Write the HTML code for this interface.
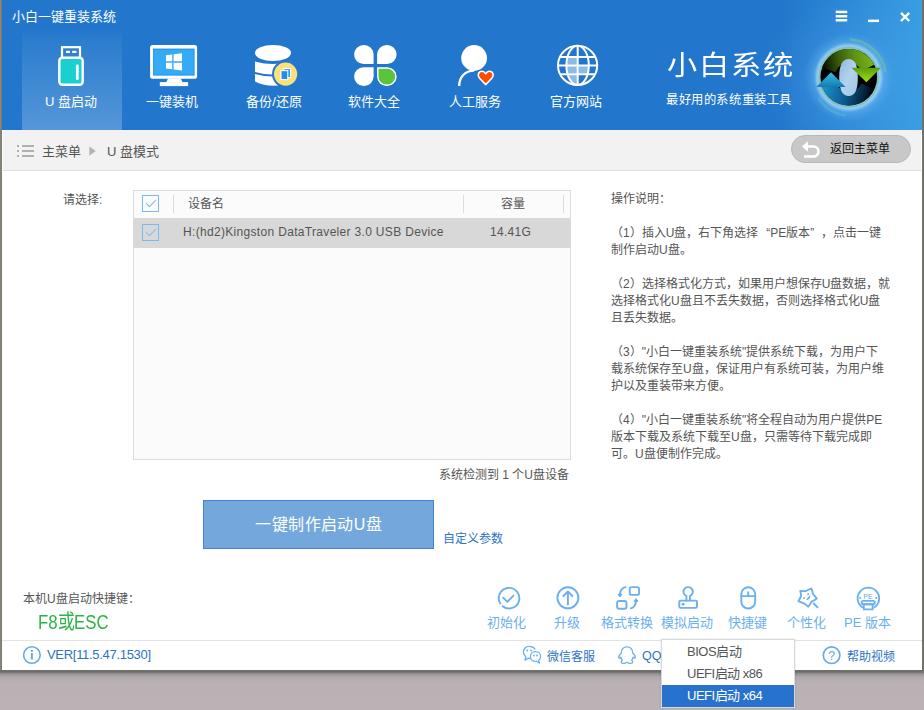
<!DOCTYPE html>
<html lang="zh-CN"><head><meta charset="utf-8">
<style>
html,body{margin:0;padding:0;}
body{width:924px;height:710px;overflow:hidden;position:relative;background:#bab2b5;font-family:"Liberation Sans",sans-serif;}
.abs{position:absolute;}
#desk{left:0;top:670px;width:924px;height:40px;background:linear-gradient(#6e6f6a 0,#6e6f6a 2px,#9a9496 4px,#b0a9ac 7px,#b9b1b4 12px,#bab2b5 100%);}
#inner{left:0;top:0;width:922px;height:670px;background:#fff linear-gradient(90deg,#fff 0,#fff 2px,#fff 2px);overflow:hidden;}
#lb{left:0;top:0;width:2px;height:670px;background:linear-gradient(90deg,#868580 0,#868580 1px,#7e7a70 1px);}
#rb{left:922px;top:0;width:2px;height:672px;background:#72726d;}
#hdr{left:0;top:0;width:922px;height:130px;background:linear-gradient(90deg,#2277cc 0,#2277cc 85%,#3a9ee3 100%);}
#glow{left:760px;top:0;width:162px;height:130px;background:radial-gradient(ellipse 90px 80px at 90px 78px,rgba(110,190,250,0.35) 0,rgba(90,170,240,0.15) 55%,rgba(60,150,230,0) 100%);}
#tabsel{left:22px;top:28px;width:100px;height:102px;background:linear-gradient(rgba(255,255,255,0) 0,rgba(255,255,255,0.05) 15%,rgba(255,255,255,0.23) 100%);}
.ttl{color:#fff;font-size:13px;white-space:nowrap;line-height:15px;}
.lbl{color:#fff;font-size:13px;white-space:nowrap;line-height:15px;text-align:center;width:100px;}
#crumb{left:3px;top:130px;width:918px;height:40px;background:#f2f2f2;border-bottom:1px solid #dedede;}
.g12{font-size:12px;color:#555;white-space:nowrap;line-height:14px;}
.g13{font-size:13px;color:#555;white-space:nowrap;line-height:15px;}
#backbtn{left:791px;top:135px;width:118px;height:26px;border:1px solid #b8b8b8;border-radius:14px;background:#c8c8c8;}
#table{left:133px;top:190px;width:436px;height:268px;border:1px solid #dcdcdc;background:#fbfbfb;}
#rowsel{left:134px;top:218px;width:436px;height:30px;background:#d8d8d8;}
.chk{width:15px;height:15px;border:1px solid #7ab8f2;background:transparent;}
#bigbtn{left:203px;top:500px;width:229px;height:47px;border:1px solid #3f87d3;background:#74a8dc;color:#fff;font-size:16px;line-height:47px;text-align:center;white-space:nowrap;letter-spacing:0.4px;text-indent:0.4px;}
.tl{width:60px;text-align:center;font-size:13px;color:#6cb0f0;line-height:15px;white-space:nowrap;}
#dd{left:661px;top:639px;width:132px;height:67px;border:1px solid #d8d8d8;background:#fff;box-shadow:0 0 2px rgba(0,0,0,0.12);}
#ddsel{left:662px;top:685px;width:132px;height:22px;background:#2672cc;}
.ddi{font-size:13px;color:#555;line-height:15px;white-space:nowrap;letter-spacing:-0.5px;}
.lk{font-size:12px;color:#2b73c5;line-height:14px;white-space:nowrap;}
</style></head>
<body>
<div class="abs" id="desk"></div>
<div class="abs" id="rb"></div>
<div class="abs" id="inner">
  <div class="abs" id="hdr"></div>
  <div class="abs" id="glow"></div>
  <div class="abs" id="tabsel"></div>
  <div class="abs ttl" style="left:12px;top:9px;">小白一键重装系统</div>
  <div class="abs lbl" style="left:21px;top:94px;">U 盘启动</div>
  <div class="abs lbl" style="left:122px;top:94px;">一键装机</div>
  <div class="abs lbl" style="left:224px;top:94px;">备份/还原</div>
  <div class="abs lbl" style="left:324px;top:94px;">软件大全</div>
  <div class="abs lbl" style="left:425px;top:94px;">人工服务</div>
  <div class="abs lbl" style="left:526px;top:94px;">官方网站</div>
  <div class="abs" id="brand" style="left:667px;top:51px;font-size:27.5px;line-height:30px;letter-spacing:2px;color:#fff;white-space:nowrap;font-weight:400;transform:scaleX(1.1);transform-origin:0 0;">小白系统</div>
  <div class="abs" id="slogan" style="left:666px;top:93px;font-size:12.3px;letter-spacing:0.6px;line-height:15px;color:#fff;white-space:nowrap;">最好用的系统重装工具</div>

    <svg class="abs" style="left:0;top:0" width="922" height="130" viewBox="0 0 922 130">
    <defs>
      <clipPath id="gcl"><ellipse cx="577.6" cy="65.4" rx="11.5" ry="19.5"/></clipPath>
      <linearGradient id="lgTop" x1="0" y1="0" x2="0" y2="1"><stop offset="0" stop-color="#7fae24"/><stop offset="0.45" stop-color="#2d3a08"/><stop offset="0.6" stop-color="#000"/></linearGradient>
      <linearGradient id="lgBot" x1="0" y1="0" x2="0" y2="1"><stop offset="0" stop-color="#000"/><stop offset="0.55" stop-color="#062a44"/><stop offset="1" stop-color="#0f5f94"/></linearGradient>
      <linearGradient id="lgG" x1="0" y1="0" x2="0" y2="1"><stop offset="0" stop-color="#5d9a10"/><stop offset="1" stop-color="#9ae20c"/></linearGradient>
      <linearGradient id="lgC" x1="0" y1="0" x2="0" y2="1"><stop offset="0" stop-color="#35c4e8"/><stop offset="1" stop-color="#137ab0"/></linearGradient>
      <linearGradient id="lgO" x1="0" y1="0" x2="1" y2="1"><stop offset="0" stop-color="#8fb8dc"/><stop offset="0.5" stop-color="#b2d2ee"/><stop offset="1" stop-color="#a0c6e8"/></linearGradient>
      <radialGradient id="rgGlow"><stop offset="0.55" stop-color="#9fdcff" stop-opacity="0.7"/><stop offset="0.75" stop-color="#7cc6f8" stop-opacity="0.35"/><stop offset="1" stop-color="#5ab0f0" stop-opacity="0"/></radialGradient><linearGradient id="lgGB" gradientUnits="userSpaceOnUse" x1="824" y1="74" x2="872" y2="64"><stop offset="0" stop-color="#050800"/><stop offset="0.35" stop-color="#3a5c0c"/><stop offset="0.7" stop-color="#5f9414"/><stop offset="1" stop-color="#78b01a"/></linearGradient><linearGradient id="lgBB" gradientUnits="userSpaceOnUse" x1="826" y1="82" x2="874" y2="92"><stop offset="0" stop-color="#1a8cc8"/><stop offset="0.45" stop-color="#0a5a8e"/><stop offset="0.8" stop-color="#04263c"/><stop offset="1" stop-color="#000"/></linearGradient><linearGradient id="lgDisc" x1="0.7" y1="0" x2="0.3" y2="1"><stop offset="0" stop-color="#84b424"/><stop offset="0.28" stop-color="#3f6410"/><stop offset="0.5" stop-color="#000"/><stop offset="0.72" stop-color="#04304e"/><stop offset="1" stop-color="#1a7ab2"/></linearGradient><filter id="blur1" x="-20%" y="-20%" width="140%" height="140%"><feGaussianBlur stdDeviation="1"/></filter><filter id="blur05" x="-20%" y="-20%" width="140%" height="140%"><feGaussianBlur stdDeviation="0.5"/></filter>
    </defs>
    <!-- window buttons -->
    <g fill="#fff">
      <rect x="835.7" y="10.7" width="11.5" height="2.5"/><rect x="835.7" y="15" width="11.5" height="2.5"/><rect x="835.7" y="19" width="11.5" height="2.5"/>
      <rect x="868" y="19.6" width="11" height="2.5"/>
    </g>
    <path d="M901 12.8 L909.2 21 M909.2 12.8 L901 21" stroke="#fff" stroke-width="2.4"/>
    <!-- USB -->
    <rect x="62" y="47.2" width="18" height="11" fill="none" stroke="#fff" stroke-width="2.2"/>
    <rect x="66" y="50.8" width="4" height="2.2" fill="#fff"/><rect x="72.2" y="50.8" width="4.2" height="2.2" fill="#fff"/>
    <rect x="59.3" y="57.7" width="23.4" height="27" rx="3" fill="#19cfcf" stroke="#fff" stroke-width="2.4"/>
    <rect x="75.9" y="64.6" width="2.8" height="15.5" rx="1.4" fill="#fff"/>
    <!-- Monitor -->
    <rect x="150.1" y="45.1" width="47" height="33.6" rx="2.5" fill="#fff"/>
    <rect x="153.1" y="48.6" width="41.5" height="27" fill="#1c90ea"/>
    <rect x="154.1" y="49.6" width="39.5" height="25" fill="#35abf6"/>
    <path d="M168 78.5 H180.8 L182.6 82.4 H166.2 Z" fill="#fff"/>
    <rect x="159.8" y="82.1" width="28.3" height="4" fill="#fff"/>
    <g fill="#fff">
      <path d="M166 55.3 L172.2 54.5 V61.2 H166 Z"/><path d="M173.6 54.3 L182 53.3 V61.2 H173.6 Z"/>
      <path d="M166 62.8 H172.2 V69.3 L166 68.5 Z"/><path d="M173.6 62.8 H182 V70.4 L173.6 69.4 Z"/>
    </g>
    <!-- Database -->
    <ellipse cx="273" cy="53" rx="18" ry="8.1" fill="#fff"/>
    <path d="M255 61.4 Q273 66.4 291 61.4 V72 Q273 77 255 72 Z" fill="#fff"/>
    <path d="M255 73.9 Q273 78.9 291 73.9 V81.4 Q273 90.2 255 81.4 Z" fill="#fff"/>
    <circle cx="285.6" cy="74.1" r="13.6" fill="#2377cc"/>
    <circle cx="285.6" cy="74.1" r="11.6" fill="#fce07c"/>
    <rect x="283.8" y="68.6" width="6.8" height="9" fill="#2196f3" stroke="#fff" stroke-width="1.1"/>
    <rect x="281" y="70.6" width="6.8" height="9" fill="#1e8ef0" stroke="#fff" stroke-width="1.1"/>
    <!-- Clover -->
    <g fill="#fff">
      <path d="M354.1 54.5 A9.6 9.6 0 0 1 363.7 44.9 H364 A9.6 9.6 0 0 1 373.6 54.5 V64 H363.6 A9.5 9.5 0 0 1 354.1 54.5 Z"/>
      <path d="M377.1 64 V54.5 A9.6 9.6 0 0 1 386.7 44.9 H387 A9.6 9.6 0 0 1 396.6 54.5 A9.5 9.5 0 0 1 387.1 64 Z"/>
      <path d="M373.6 67.3 V76.6 A9.4 9.4 0 0 1 364.2 86 H363.5 A9.4 9.4 0 0 1 354.1 76.6 A9.3 9.3 0 0 1 363.4 67.3 Z"/>
    </g>
    <path d="M377.8 68 H387.2 A8.7 8.7 0 0 1 395.9 76.7 A8.6 8.6 0 0 1 387.2 85.3 H386.5 A8.7 8.7 0 0 1 377.8 76.6 Z" fill="#5bc43a" stroke="#fff" stroke-width="1.5"/>
    <!-- Person -->
    <circle cx="474.1" cy="58" r="12.9" fill="#fff"/>
    <path d="M459.2 86 C459.2 77 465 70.8 474 70.6" fill="none" stroke="#fff" stroke-width="2.3"/>
    <path d="M485.7 84.6 L479.6 78.2 C476.9 75.4 478.4 71.3 482 71.3 C483.8 71.3 485 72.6 485.7 73.8 C486.4 72.6 487.6 71.3 489.4 71.3 C493 71.3 494.5 75.4 491.8 78.2 Z" fill="#ff4b00" stroke="#fff" stroke-width="1.6" stroke-linejoin="round"/>
    <!-- Globe -->
    <g clip-path="url(#gcl)" fill="#8dbbe8">
      <rect x="566" y="57.5" width="11" height="7.4"/>
      <rect x="566" y="66" width="11" height="7.7"/>
      <rect x="578.6" y="66" width="11" height="7.7"/>
      <rect x="566" y="74.8" width="11" height="11"/>
    </g>
    <g fill="none" stroke="#fff" stroke-width="2">
      <circle cx="577.6" cy="65.4" r="19.6"/>
      <ellipse cx="577.6" cy="65.4" rx="11.2" ry="19.6"/>
      <path d="M577.7 46 V85 M560 56.9 H595.2 M558.2 65.4 H597 M560.1 74.2 H595.1"/>
    </g>
    <!-- Logo -->
    <circle cx="848.8" cy="77.2" r="45" fill="url(#rgGlow)"/>
    <circle cx="848.8" cy="77.2" r="31" fill="none" stroke="#c4eaff" stroke-width="4.5" opacity="0.5" filter="url(#blur1)"/>
    <path d="M850 39.5 A38 38 0 0 1 885.5 72" fill="none" stroke="#79c48e" stroke-width="2.4" opacity="0.55" filter="url(#blur05)"/>
    <path d="M818.5 98 A38 38 0 0 0 846 115.5" fill="none" stroke="#5ab6d0" stroke-width="2.4" opacity="0.55" filter="url(#blur05)"/>
    <circle cx="848.8" cy="77.2" r="29.6" fill="none" stroke="#86bd8c" stroke-width="1.6" opacity="0.7"/>
    <circle cx="848.8" cy="77.2" r="28.3" fill="#000"/>
    <path d="M828.8 69.9 A21.3 21.3 0 0 1 867.9 67.9" fill="none" stroke="url(#lgGB)" stroke-width="14"/>
    <path d="M828.8 84.5 A21.3 21.3 0 0 0 867.9 86.5" fill="none" stroke="url(#lgBB)" stroke-width="14"/>
    <path d="M839.2 77.5 C839.2 65 842.5 59 848.6 59 C855 59 857.8 65 857.8 77.5 C857.8 90 855 96 848.6 96 C842.5 96 839.2 90 839.2 77.5 Z" fill="url(#lgO)"/>
    <path d="M851.4 67.7 H881 L866.4 82.2 Z" fill="url(#lgG)"/>
    <path d="M816.3 87 H845.6 L831 72.2 Z" fill="url(#lgC)"/>
  </svg>


  <div class="abs" id="crumb"></div>
  <div class="abs g13" style="left:42px;top:144px;">主菜单</div>
  <div class="abs g13" style="left:107px;top:144px;">U 盘模式</div>
  <svg class="abs" style="left:0;top:130px" width="922" height="40" viewBox="0 130 922 40">
    <g fill="#b0b0b0"><rect x="17" y="145" width="2" height="2"/><rect x="17" y="150" width="2" height="2"/><rect x="17" y="155" width="2" height="2"/>
    <rect x="22" y="145" width="12" height="2"/><rect x="22" y="150" width="12" height="2"/><rect x="22" y="155" width="12" height="2"/></g>
    <path d="M89.3 146.5 L95.8 151.1 L89.3 155.7 Z" fill="#b3b3b3"/>
  </svg>
  <div class="abs" id="backbtn"></div>
  <svg class="abs" style="left:0;top:130px" width="922" height="40" viewBox="0 130 922 40">
    <path d="M805 146.5 H813.5 A5 5 0 0 1 813.5 156.5 H804" fill="none" stroke="#fff" stroke-width="2.6"/>
    <path d="M801.8 146.5 L808 141.2 L808 151.8 Z" fill="#fff"/>
  </svg>
  <div class="abs" id="backtxt" style="left:830px;top:142px;font-size:12px;color:#111;line-height:14px;white-space:nowrap;">返回主菜单</div>

  <!-- left content -->
  <div class="abs g12" style="left:63px;top:193px;">请选择:</div>
  <div class="abs" id="table"></div>
  <div class="abs" id="rowsel"></div>
  <div class="abs chk" style="left:142px;top:195px;"></div>
  <div class="abs chk" style="left:142px;top:224px;"></div>
  <svg class="abs" style="left:0;top:190px" width="580" height="60" viewBox="0 190 580 60">
    <path d="M146 203.2 L149.5 206.6 L155.8 200.2" fill="none" stroke="#86bff2" stroke-width="1.1"/>
    <path d="M146 232.2 L149.5 235.6 L155.8 229.2" fill="none" stroke="#86bff2" stroke-width="1.1"/>
  </svg>
  <div class="abs" style="left:173px;top:195px;width:1px;height:18px;background:#dcdcdc"></div>
  <div class="abs" style="left:463px;top:195px;width:1px;height:18px;background:#dcdcdc"></div>
  <div class="abs" style="left:563px;top:195px;width:1px;height:18px;background:#dcdcdc"></div>
  <div class="abs g12" style="left:188px;top:197px;">设备名</div>
  <div class="abs g12" style="left:501px;top:197px;">容量</div>
  <div class="abs g13" id="devname" style="left:183px;top:225px;font-size:12px;letter-spacing:0.32px;">H:(hd2)Kingston DataTraveler 3.0 USB Device</div>
  <div class="abs g13" id="cap" style="left:490px;top:225px;font-size:12px;letter-spacing:0.3px;">14.41G</div>
  <div class="abs g12" id="detect" style="left:439px;top:468px;">系统检测到 1 个U盘设备</div>
  <div class="abs" id="bigbtn">一键制作启动U盘</div>
  <div class="abs lk" id="custom" style="left:443px;top:532px;">自定义参数</div>

  <!-- right panel -->
  <div class="abs g12" id="help" style="left:611px;top:191px;line-height:17px;">操作说明：<br><br>
  （1）插入U盘，右下角选择<span style="margin-left:8px">“</span>PE版本”<span style="margin-left:7px">，</span>点击一键<br>制作启动U盘。<br><br>
  （2）选择格式化方式，如果用户想保存U盘数据，就<br>选择格式化U盘且不丢失数据，否则选择格式化U盘<br>且丢失数据。<br><br>
  （3）"小白一键重装系统"提供系统下载，为用户下<br>载系统保存至U盘，保证用户有系统可装，为用户维<br>护以及重装带来方便。<br><br>
  （4）"小白一键重装系统"将全程自动为用户提供PE<br>版本下载及系统下载至U盘，只需等待下载完成即<br>可。U盘便制作完成。</div>

  <!-- shortcut -->
  <div class="abs g12" style="left:23px;top:592px;">本机U盘启动快捷键：</div>
  <div class="abs" id="f8" style="left:38px;top:611px;font-size:20.5px;line-height:22px;transform:scaleX(0.82);transform-origin:0 0;color:#2bb548;white-space:nowrap;">F8或ESC</div>

  <!-- tools -->
  <div class="abs tl" style="left:476px;top:615px;">初始化</div>
  <div class="abs tl" style="left:537px;top:615px;">升级</div>
  <div class="abs tl" style="left:597px;top:615px;">格式转换</div>
  <div class="abs tl" style="left:657px;top:615px;">模拟启动</div>
  <div class="abs tl" style="left:717px;top:615px;">快捷键</div>
  <div class="abs tl" style="left:776.5px;top:615px;">个性化</div>
  <div class="abs tl" style="left:837.5px;top:615px;">PE 版本</div>
    <svg class="abs" style="left:470px;top:580px" width="430" height="35" viewBox="470 580 430 35">
    <g fill="none" stroke="#6cb0f0" stroke-width="1.9" stroke-linecap="round" stroke-linejoin="round">
      <!-- init -->
      <path d="M500.3 603.6 A10.3 10.3 0 1 1 502.6 606.2"/>
      <path d="M503.2 597.6 L507.3 601.8 L513.5 595.6"/>
      <!-- upgrade -->
      <circle cx="567.9" cy="597.8" r="10.5"/>
      <path d="M567.9 604.5 V591.5 M563.4 596 L567.9 591.5 L572.4 596"/>
      <!-- format -->
      <rect x="629.7" y="587.1" width="9.4" height="7.8" rx="2"/>
      <rect x="617.1" y="601" width="9.4" height="7.8" rx="2"/>
      <path d="M625.5 587.2 Q620.3 588.5 620 594"/>
      <path d="M630.8 608.4 Q635.8 607 636 601"/>
      <!-- stamp -->
      <path d="M686.4 600.6 V596 A4.7 4.6 0 1 1 689.9 596 V600.6"/>
      <rect x="679.3" y="600.6" width="17.7" height="7.3" rx="1.2"/>
      <!-- mouse -->
      <rect x="741.3" y="587.3" width="13.9" height="21.2" rx="6.9"/>
      <path d="M741.3 596.1 H755.2 M748.2 592.2 V596"/>
      <!-- star -->
      <path d="M811.2 588.5 Q812.6 591 812.9 593.8 Q815 596.4 816.8 598.4 Q814.3 600.2 811.6 601.6 Q810 604.5 808.3 606.8 Q806.4 605 804.4 603.7 Q801.3 602.6 798.4 601.2 Q800 598.5 801.2 595.7 Q800.7 593.4 800.3 590.9 Q803 591 805.7 591.1 Q808.4 589.7 811.2 588.5 Z"/>
      <path d="M813.7 603.5 L817.6 607.4"/>
      <path d="M807.3 599.2 Q809.3 598.3 809.6 596.4" stroke-width="1.6"/>
      <!-- PE -->
      <path d="M862.2 607.3 A10.8 10.8 0 1 1 874.6 607.3"/>
      <rect x="861.6" y="600.9" width="13.2" height="3.4" rx="1.7"/>
      <rect x="863.8" y="604.3" width="8.9" height="5.1"/>
    </g>
    <g fill="#66aaee">
      <path d="M618.1 594.3 L621.8 594.3 L620 597 Z" stroke="#66aaee" stroke-width="1" stroke-linejoin="round"/>
      <path d="M634.2 601.3 L637.9 601.3 L636 598.6 Z" stroke="#66aaee" stroke-width="1" stroke-linejoin="round"/>
      <ellipse cx="683" cy="604.2" rx="1.5" ry="1.2"/>
      <rect x="807.3" y="593.3" width="1.6" height="1.6"/>
      <rect x="803.3" y="597.3" width="1.6" height="1.6"/>
      <rect x="859.4" y="597" width="1.7" height="1.7"/>
      <rect x="875.4" y="597" width="1.7" height="1.7"/>
      <text x="868.1" y="598.6" font-size="7.2" text-anchor="middle" font-family="Liberation Sans" fill="#66aaee">PE</text>
    </g>
  </svg>


  <!-- footer -->
  <div class="abs" style="left:2px;top:640px;width:920px;height:1px;background:#e3e3e3"></div>
  <div class="abs" id="ver" style="left:47px;top:647px;font-size:13px;letter-spacing:-0.3px;color:#2b73c5;line-height:15px;white-space:nowrap;">VER[11.5.47.1530]</div>
  <div class="abs lk" style="left:547px;top:650px;">微信客服</div>
  <div class="abs lk" style="left:642px;top:649px;font-size:12.5px;">QQ</div>
  <div class="abs lk" style="left:847px;top:650px;">帮助视频</div>
    <svg class="abs" style="left:0;top:640px" width="922" height="30" viewBox="0 640 922 30">
    <g fill="none" stroke="#66aaee" stroke-width="1.6">
      <circle cx="31.9" cy="655" r="8.3"/>
      <circle cx="831.6" cy="655.2" r="8.3"/>
    </g>
    <g fill="#66aaee">
      <rect x="30.9" y="653" width="2" height="6.5"/><rect x="30.9" y="650" width="2" height="2"/>
    </g>
    <text x="831.6" y="660.2" font-size="13" text-anchor="middle" font-family="Liberation Sans" fill="#66aaee">?</text>
    <g fill="none" stroke="#6cb0f0" stroke-width="1.3" stroke-linejoin="round">
      <path d="M535.2 649.3 C534 647.4 531.8 646.3 529.2 646.3 C525.9 646.3 523.4 648.9 523.4 652 C523.4 654 524.4 655.7 525.9 656.8 L524.9 660.2 L528.4 658.1 C529 658.2 529.6 658.3 530.2 658.3"/>
      <path d="M535.5 651.7 C538.5 651.7 540.6 653.8 540.6 656.5 C540.6 658.2 539.8 659.6 538.6 660.6 L539.6 663.2 L536.6 661.3 C536.2 661.4 535.8 661.4 535.5 661.4 C532.5 661.4 530.4 659.3 530.4 656.5 C530.4 653.8 532.5 651.7 535.5 651.7 Z"/>
      <path d="M627 646.8 C623 646.8 621.4 649.8 621.2 653.3 C619.6 654.5 618.6 656.6 618.8 658 C619.3 658.5 620.2 657.9 620.9 657.2 C621.1 658.4 621.7 659.5 622.4 660.3 C621.2 661 620.9 662.6 622.1 663.1 C623.8 663.6 625.6 663.3 627 662.3 C628.4 663.3 630.2 663.6 631.9 663.1 C633.1 662.6 632.8 661 631.6 660.3 C632.3 659.5 632.9 658.4 633.1 657.2 C633.8 657.9 634.7 658.5 635.2 658 C635.4 656.6 634.4 654.5 632.8 653.3 C632.6 649.8 631 646.8 627 646.8 Z"/>
    </g>
    <g fill="#6cb0f0">
      <circle cx="527.3" cy="650.4" r="1"/><circle cx="531.3" cy="650.4" r="1"/>
      <circle cx="533.9" cy="655.5" r="0.9"/><circle cx="537" cy="655.5" r="0.9"/>
    </g>
  </svg>

</div>
<div class="abs" id="lb"></div>
<div class="abs" id="dd"></div>
<div class="abs" id="ddsel"></div>
<div class="abs ddi" style="left:687px;top:644px;">BIOS启动</div>
<div class="abs ddi" style="left:687px;top:666px;">UEFI启动 x86</div>
<div class="abs ddi" style="left:687px;top:688px;color:#fff">UEFI启动 x64</div>
</body></html>
